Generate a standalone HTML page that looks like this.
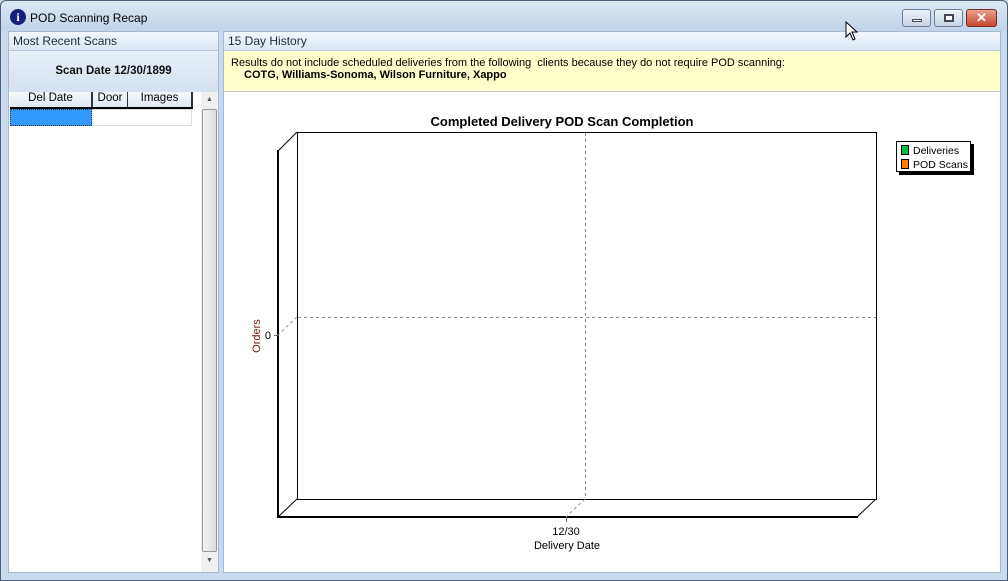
<!DOCTYPE html>
<html><head><style>
*{margin:0;padding:0;box-sizing:border-box}
body{width:1008px;height:581px;overflow:hidden;font-family:"Liberation Sans",sans-serif;font-size:12px;background:#c9daee;position:relative}
.a{position:absolute}
.btn{position:absolute;top:9px;height:18px;border:1px solid #6d7d93;border-radius:3px;background:linear-gradient(#eef3fa,#c6d4e6)}
.hdr{background:linear-gradient(#f3f7fc,#dbe6f4);border-bottom:1px solid #b9c9de;color:#1e2b3c;font-size:12px;padding:3px 4px}
</style></head><body>
<div class="a" style="left:0;top:0;width:1008px;height:581px;border:1px solid #4c5f7a;border-radius:6px 6px 0 0;background:linear-gradient(#dce8f5 0,#bfd3ea 30px,#c9daee 30px)"></div>
<div class="a" style="left:10px;top:9px;width:16px;height:16px;border-radius:50%;background:#13207e;color:#fff;font:bold 12px 'Liberation Serif',serif;text-align:center;line-height:16px">i</div>
<div class="a" style="left:30px;top:11px;font-size:12px;color:#000">POD Scanning Recap</div>
<div class="btn" style="left:902px;width:29px"><div class="a" style="left:9px;top:9px;width:10px;height:3px;background:#fff;border:1px solid #445"></div></div>
<div class="btn" style="left:934px;width:29px"><div class="a" style="left:9px;top:4px;width:10px;height:8px;border:2px solid #445;background:#fff"></div></div>
<div class="btn" style="left:966px;width:31px;background:linear-gradient(#e8a08f,#c4492f);border-color:#7a2a1e;color:#fff;font-weight:bold;text-align:center;line-height:15px;font-size:13px">✕</div>
<!-- left panel -->
<div class="a" style="left:8px;top:31px;width:211px;height:542px;background:#fff;border:1px solid #a6b8cf">
 <div class="hdr" style="height:19px;padding-top:2px">Most Recent Scans</div>
 <div style="height:41px;background:linear-gradient(#e8eff8,#d4e1f1);font-weight:bold;font-size:11.5px;text-align:center;line-height:40px;color:#111">Scan Date 12/30/1899</div>
 <div class="a" style="left:1px;top:60px;width:183px;height:17px;display:flex;background:linear-gradient(#f6f9fd,#dfe8f3);border-bottom:2px solid #000;font-size:11.5px">
  <div style="width:83px;text-align:center;border-right:2px solid #333">Del Date</div>
  <div style="width:35px;text-align:center;border-right:1px solid #333">Door</div>
  <div style="width:65px;text-align:center;border-right:2px solid #333">Images</div>
 </div>
 <div class="a" style="left:1px;top:77px;width:82px;height:17px;background:#3399ff;border:1px dotted #333"></div>
 <div class="a" style="left:83px;top:77px;width:100px;height:17px;border:1px solid #ddd;border-left:0"></div>
 <div class="a" style="left:192px;top:60px;width:17px;height:480px;background:#f0f0f0">
  <div style="text-align:center;font-size:7px;color:#555;margin-top:4px">▲</div>
  <div class="a" style="left:1px;top:17px;width:15px;height:443px;border:1px solid #999;border-radius:2px;background:linear-gradient(90deg,#f3f3f3,#dcdcdc)"></div>
  <div class="a" style="left:0;top:465px;width:17px;text-align:center;font-size:7px;color:#555">▼</div>
 </div>
</div>
<!-- right panel -->
<div class="a" style="left:223px;top:31px;width:778px;height:542px;background:#fff;border:1px solid #a6b8cf">
 <div class="hdr" style="height:19px;padding-top:2px">15 Day History</div>
 <div style="height:41px;background:#ffffcc;border-bottom:1px solid #ccc;padding:6px 0 0 7px;font-size:11px;color:#000">Results do not include scheduled deliveries from the following&nbsp; clients because they do not require POD scanning:<br><b style="margin-left:13px">COTG, Williams-Sonoma, Wilson Furniture, Xappo</b></div>
</div>
<svg class="a" style="left:0;top:0" width="1008" height="581">
 <text x="562" y="126" text-anchor="middle" font-family="Liberation Sans" font-weight="bold" font-size="13">Completed Delivery POD Scan Completion</text>
 <g fill="none" stroke="#000">
  <rect x="297.5" y="132.5" width="579" height="367"/>
  <line x1="297" y1="132" x2="278" y2="151"/>
  <line x1="297" y1="499" x2="278" y2="517"/>
  <line x1="876" y1="499" x2="857" y2="517"/>
  <line x1="278" y1="150" x2="278" y2="518" stroke-width="2"/>
  <line x1="277" y1="517" x2="858" y2="517" stroke-width="2"/>
 </g>
 <g stroke="#888" stroke-dasharray="3,3" fill="none">
  <line x1="585.5" y1="133" x2="585.5" y2="499"/>
  <line x1="298" y1="317.5" x2="876" y2="317.5"/>
  <line x1="297" y1="317" x2="278" y2="335"/>
  <line x1="585" y1="499" x2="566" y2="517"/>
 </g>
 <line x1="274" y1="335.5" x2="278" y2="335.5" stroke="#666"/>
 <line x1="566.5" y1="517" x2="566.5" y2="522" stroke="#666"/>
 <text x="271" y="339" text-anchor="end" font-family="Liberation Sans" font-size="11">0</text>
 <text x="260" y="336" text-anchor="middle" font-family="Liberation Sans" font-size="11" fill="#7a1010" transform="rotate(-90 260 336)">Orders</text>
 <text x="566" y="535" text-anchor="middle" font-family="Liberation Sans" font-size="11">12/30</text>
 <text x="567" y="549" text-anchor="middle" font-family="Liberation Sans" font-size="11">Delivery Date</text>
 <rect x="899" y="144" width="75" height="31" fill="#000"/>
 <rect x="896.5" y="141.5" width="74" height="30" fill="#fff" stroke="#000"/>
 <rect x="901.5" y="145.5" width="7" height="9" fill="#00c040" stroke="#000"/>
 <rect x="901.5" y="159.5" width="7" height="9" fill="#ff8000" stroke="#000"/>
 <text x="913" y="154" font-family="Liberation Sans" font-size="10.5">Deliveries</text>
 <text x="913" y="168" font-family="Liberation Sans" font-size="10.5" textLength="55">POD Scans</text>
 <path d="M846 22 L846 37 L850 33 L853 40 L855 39 L852 32 L857 32 Z" fill="#fff" stroke="#000"/>
</svg>
</body></html>
